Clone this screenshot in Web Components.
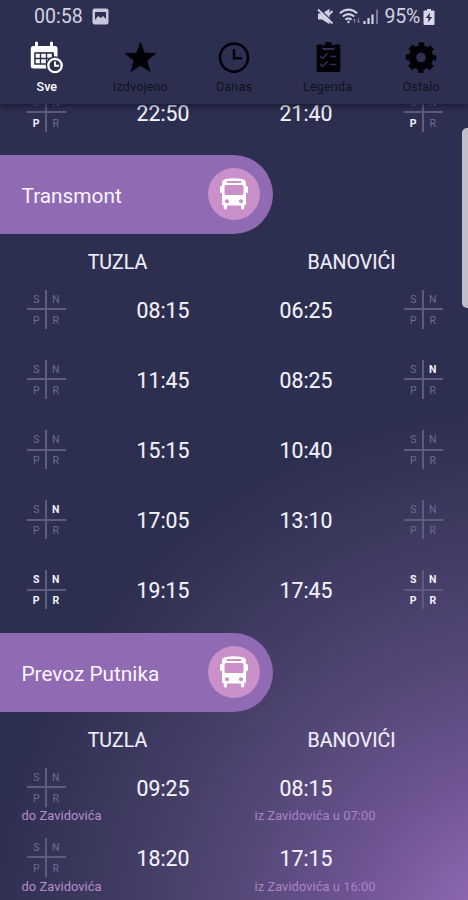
<!DOCTYPE html>
<html lang="bs">
<head>
<meta charset="utf-8">
<title>Red vožnje</title>
<style>
html,body{margin:0;padding:0}
body{width:468px;height:900px;overflow:hidden;font-family:Roboto,"Liberation Sans",sans-serif}
</style>
</head>
<body>
<bus-app></bus-app>
<script>
class Base extends HTMLElement {
  connectedCallback() {
    if (this.shadowRoot) return;
    this.attachShadow({mode: 'open'}).innerHTML = this.render();
  }
}

customElements.define('status-bar', class extends Base {
  render() {
    return `<style>
:host{display:flex;align-items:center;height:33px;padding:0 33px 0 34px;color:#d3d1e3;font-size:19.600px;line-height:33px}
svg{display:block;flex:none}
.gap{flex:1}
</style>
<span>00:58</span>
<svg style="margin-left:9px" width="17" height="17" viewBox="0 0 17 17"><rect x=".5" y=".5" width="16" height="16" rx="2.2" fill="#c9c7dc"/><path d="M3 4h11v7l-3-3-2 2-3-2-3 4z" fill="#2d2f50"/><path d="M3 13l3-4 2.500 2.500L11 8.500l3 4V14H3z" fill="#c9c7dc"/></svg>
<span class="gap"></span>
<svg width="17" height="17" viewBox="0 0 17 17"><path d="M1 5.500h4L12.500.8v15.400L5 11.500H1z" fill="#d3d1e3"/><path d="M1.500 0l15 14.500" stroke="#2d2f50" stroke-width="1.500"/><path d="M1 1.500l14.500 14M12 6.500L15.500 3" stroke="#d3d1e3" stroke-width="1.900"/></svg>
<svg style="margin-left:5px" width="22" height="17" viewBox="0 0 22 17" fill="none" stroke="#d3d1e3" stroke-width="2"><path d="M.8 5.200Q9.500-2 18.200 5.200M3.700 8.500Q9.500 3.800 15.300 8.500M6.500 11.600Q9.500 9.400 12.500 11.600"/><circle cx="9.500" cy="14" r="1.200" fill="#d3d1e3" stroke="none"/><path d="M15.500 15v-4m-1.500 1.500l1.500-1.500 1.500 1.500M19.500 10v4.500m-1.500-1.500l1.500 1.500 1.500-1.500" stroke="#77779b" stroke-width="1"/></svg>
<svg style="margin-left:2px" width="16" height="17" viewBox="0 0 16 17"><path d="M1.500 13v3M5.500 10v6M9.500 6.500V16" stroke="#d3d1e3" stroke-width="2.200"/><path d="M14 1.500V16" stroke="#77779b" stroke-width="2"/></svg>
<span style="margin-left:5px;font-size:19.500px;letter-spacing:-.2px">95%</span>
<svg style="margin-left:3px" width="12" height="16" viewBox="0 0 12 16"><path d="M4 0h4v1.500h2.500q1 0 1 1V15q0 1-1 1h-9q-1 0-1-1V2.500q0-1 1-1H4z" fill="#d9d7e8"/><path d="M7 3.500L2.800 9h2.700L5 13.500 9.200 8H6.500z" fill="#2d2f50"/></svg>`;
  }
});

const NAV = {
  calendar: `<svg width="34" height="34" viewBox="0 0 34 34"><path d="M3 5h2V2q0-1.500 1.500-1.500T8 2v3h12V2q0-1.500 1.500-1.500T23 2v3h2q2.500 0 2.500 2.500V16H24v-4.500H4.500V24H17v3.500H3.500Q.8 27.500.8 25V7.500Q.8 5 3 5z" fill="#fff"/><path d="M5 12h18v12H5z" fill="#fff"/><path d="M5 12h18M5 17.500h18M5 23h15M5 12v11M10.500 12v11M16.500 12v11M22.500 12v5" stroke="#2d2f50" stroke-width="1.400"/><circle cx="25" cy="24.500" r="9.300" fill="#2d2f50"/><circle cx="25" cy="24.500" r="6.700" fill="#2d2f50" stroke="#fff" stroke-width="2.300"/><path d="M25 20.500v4.200h4" stroke="#fff" stroke-width="1.900" fill="none"/></svg>`,
  star: `<svg width="34" height="34" viewBox="0 0 34 34"><path d="M17.500 1.500l4 10.500 11.500.400-9 7.200 3 11-9.500-6.200L8 30.600l3-11-9-7.200 11.500-.4z" fill="#010106" stroke="#010106" stroke-width=".6"/></svg>`,
  clock: `<svg width="34" height="34" viewBox="0 0 34 34" fill="none" stroke="#03030d"><circle cx="17" cy="16.600" r="14" stroke-width="2.600"/><path d="M17 8v9.300h8" stroke-width="2.500"/></svg>`,
  clipboard: `<svg width="34" height="34" viewBox="0 0 34 34"><path d="M7 3.500h4V7q0 2 2 2h9q2 0 2-2V3.500h4q1.300 0 1.300 1.300v25q0 1.200-1.300 1.200H7q-1.300 0-1.300-1.200v-25Q5.700 3.500 7 3.500z" fill="#010106"/><path d="M12.200 4h2V3Q14.200 1 16 1h3q1.800 0 1.800 2v1h2q1 0 1 1v2h-12.500V5q0-1 .9-1z" fill="#010106"/><path d="M9 15l2.400 2.400 5.200-5.200M9 23l2.400 2.400 5.200-5.200M19 15.500h6.500M19 23.500h6.500" fill="none" stroke="#2d2f50" stroke-width="1.600"/></svg>`,
  gear: `<svg width="34" height="34" viewBox="0 0 34 34"><g fill="none" stroke="#010106"><circle cx="17" cy="16.500" r="8.500" stroke-width="7.400"/><circle cx="17" cy="16.500" r="12.700" stroke-width="5.200" stroke-dasharray="5.400 4.575" stroke-dashoffset="2.700"/></g></svg>`
};

customElements.define('nav-tab', class extends Base {
  render() {
    return `<style>
:host{display:flex;flex-direction:column;align-items:center;flex:1;color:#11111f;font-size:12.500px;letter-spacing:.2px}
:host([active]){color:#fff;font-weight:500;letter-spacing:0}
svg{display:block}
span{line-height:16px;margin-top:3.500px}
</style>${NAV[this.getAttribute('icon')]}<span><slot></slot></span>`;
  }
});

customElements.define('app-header', class extends Base {
  render() {
    return `<style>
:host{display:block;height:104px;background:#2d2f50;box-shadow:0 2px 6px rgba(10,10,35,.65);position:relative;z-index:2}
nav{display:flex;padding-top:8px}
</style>
<status-bar></status-bar>
<nav><nav-tab icon="calendar" active>Sve</nav-tab><nav-tab icon="star">Izdvojeno</nav-tab><nav-tab icon="clock">Danas</nav-tab><nav-tab icon="clipboard">Legenda</nav-tab><nav-tab icon="gear">Ostalo</nav-tab></nav>`;
  }
});

customElements.define('day-cross', class extends Base {
  render() {
    const on = this.getAttribute('on') || '';
    return `<style>
:host{display:grid;grid-template-columns:1fr 1fr;grid-template-rows:1fr 1fr;row-gap:1px;width:39px;height:39px;
background:linear-gradient(#5d5c80,#5d5c80) center/100% 2px no-repeat,linear-gradient(#5d5c80,#5d5c80) center/2px 100% no-repeat;
color:#6d6c92;font-size:10.500px;line-height:20px;text-align:center}
:host([faint]){opacity:.25}
:host([hidden]){display:grid;visibility:hidden}
b{color:#f3f1fa;font-weight:700}
</style>${[...'SNPR'].map(c => on.includes(c) ? `<b>${c}</b>` : `<span>${c}</span>`).join('')}`;
  }
});

customElements.define('time-row', class extends Base {
  render() {
    const a = n => this.getAttribute(n) || '';
    return `<style>
:host{display:grid;grid-template-columns:92px 142px 144px 90px;grid-template-rows:39px 12.700px;row-gap:3px;padding-top:15.500px;height:54.700px;justify-items:center;align-items:center}
.t{color:#f4f3fa;font-size:21.200px;line-height:39px;height:39px;padding-top:1px;box-sizing:border-box;-webkit-text-stroke:.12px #f4f3fa}
small{font-size:12.900px;letter-spacing:.05px;line-height:13px;color:#b78dcc;grid-column:1/3;justify-self:start;padding-left:21.500px;white-space:nowrap}
small+small{grid-column:3/5;padding-left:20.500px;color:#ab82c6}
</style>
<day-cross on="${a('l')}"></day-cross><span class="t">${a('from')}</span><span class="t">${a('to')}</span><day-cross on="${a('r')}" ${a('right')}></day-cross>
${a('note-l') ? `<small>${a('note-l')}</small><small>${a('note-r')}</small>` : ''}`;
  }
});

customElements.define('company-banner', class extends Base {
  render() {
    return `<style>
:host{display:flex;align-items:center;justify-content:space-between;box-sizing:border-box;width:273px;height:78.500px;margin-top:8px;padding:0 13px 0 21.500px;background:#906ab2;border-radius:0 40px 40px 0;color:#fbf5ff;font-size:20.800px}
i{display:grid;place-items:center;width:52px;height:52px;border-radius:50%;background:#c990ca}
svg{display:block}
span{padding-top:4px}
</style><span><slot></slot></span>
<i><svg width="30" height="32" viewBox="0 0 30 32"><path fill="#fff" fill-rule="evenodd" d="M7 1q8-1.500 16 0 4 .8 4 4v3h.7q1.300 0 1.300 1.500v4q0 1.500-1.300 1.500H27v10.500q0 2-1.800 2V30q0 1.500-1.600 1.500T22 30v-2.500H8V30q0 1.500-1.600 1.500T4.800 30v-2.500Q3 27.500 3 25.500V15h-.7Q1 15 1 13.500v-4Q1 8 2.300 8H3V5q0-3.200 4-4zM8.500 2.900a1 1 0 0 0 0 2h13a1 1 0 0 0 0-2zM7 7q-1.500 0-1.500 1.500v7Q5.500 17 7 17h16q1.500 0 1.500-1.500v-7Q24.500 7 23 7zM8 21.300a2 2 0 1 0 .01 0zM22 21.300a2 2 0 1 0 .01 0z"/></svg></i>`;
  }
});

customElements.define('town-heads', class extends Base {
  render() {
    return `<style>
:host{display:grid;grid-template-columns:1fr 1fr;height:40.500px;box-sizing:border-box;text-align:center;color:#f0eef8;font-size:19.600px;line-height:24px;padding-top:17.500px;-webkit-text-stroke:.12px #f0eef8}
span{padding-left:1px}
</style><span><slot name="a"></slot></span><span><slot name="b"></slot></span>`;
  }
});

customElements.define('bus-app', class extends Base {
  render() {
    const heads = '<town-heads><span slot="a">TUZLA</span><span slot="b">BANOVIĆI</span></town-heads>';
    return `<style>
:host{display:block;position:relative;width:468px;height:900px;overflow:hidden;
background:radial-gradient(ellipse 530px 540px at 520px 950px,#966db6 0,#8b67ae 14%,#6e5492 33%,#564879 53%,#413c64 75%,#2d2f50 100%) #2d2f50}
main{margin-top:-27px}
.bar{position:absolute;right:0;top:128px;width:6px;height:180px;background:#bfbdcc;border-radius:5px 0 0 5px}
</style>
<app-header></app-header>
<main>
<time-row l="P" from="22:50" to="21:40" r="P"></time-row>
<company-banner>Transmont</company-banner>${heads}
<time-row from="08:15" to="06:25"></time-row>
<time-row from="11:45" to="08:25" r="N"></time-row>
<time-row from="15:15" to="10:40"></time-row>
<time-row l="N" from="17:05" to="13:10"></time-row>
<time-row l="SNPR" from="19:15" to="17:45" r="SNPR"></time-row>
<company-banner>Prevoz Putnika</company-banner>${heads}
<time-row from="09:25" to="08:15" right="faint" note-l="do Zavidovića" note-r="iz Zavidovića u 07:00"></time-row>
<time-row from="18:20" to="17:15" right="hidden" note-l="do Zavidovića" note-r="iz Zavidovića u 16:00"></time-row>
</main>
<div class="bar"></div>`;
  }
});
</script>
</body>
</html>
